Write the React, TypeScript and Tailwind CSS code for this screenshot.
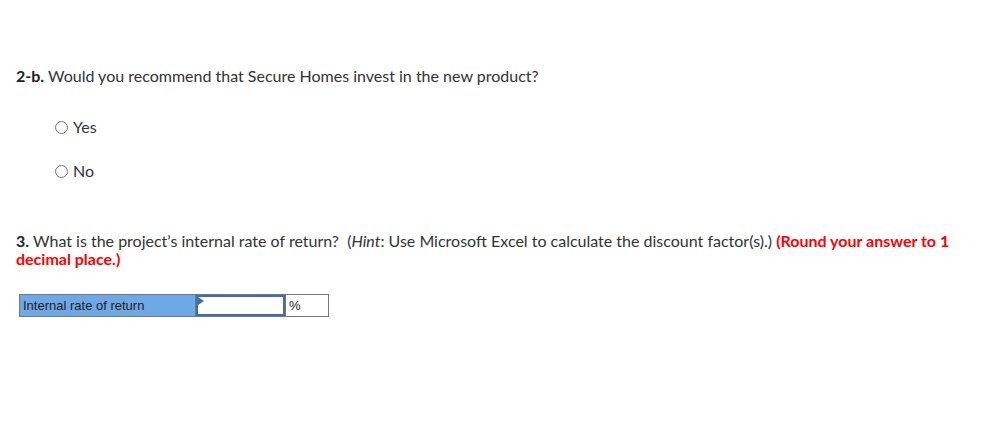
import { useState } from 'react';

const FONT = "font-['Lato','Liberation_Sans',sans-serif]";

export default function App() {
  const [choice, setChoice] = useState('');
  const [irr, setIrr] = useState('');

  return (
    <div className={`w-[1000px] h-[430px] bg-white text-[#333] ${FONT} text-[16px]`}>
      <div className="pt-[67px] pl-[16px]">
        <p className="leading-[18px]">
          <b className="font-bold text-[#222]">2-b.</b> Would you recommend that Secure Homes invest in the new product?
        </p>

        <div className="pl-[39px] pt-[33px] flex flex-col gap-[26px]">
          {['Yes', 'No'].map(opt => (
            <label key={opt} className="flex items-center gap-[5px] leading-[18px] cursor-pointer">
              <input
                type="radio"
                name="recommend"
                checked={choice === opt}
                onChange={() => setChoice(opt)}
                className="w-[13px] h-[13px] m-0 accent-[#666]"
              />
              <span>{opt}</span>
            </label>
          ))}
        </div>

        <p className="mt-[52px] leading-[18px] w-[935px]">
          <b className="font-bold text-[#222]">3.</b> What is the project’s internal rate of return?&nbsp; (<i>Hint</i>: Use Microsoft Excel to calculate the discount factor(s).){' '}
          <b className="font-bold text-[#f00]">(Round your answer to 1 decimal place.)</b>
        </p>

        <div className="mt-[26px] ml-[3px] flex w-[310px] h-[23px] border border-[#777] font-['Liberation_Sans',Arial,sans-serif] text-[13px] text-[#222]">
          <div className="w-[176px] bg-[#6fa8e6] border-r border-[#777] flex items-center pl-[3px]">
            Internal rate of return
          </div>
          <div className="relative w-[89px] border-2 border-[#3a6fb5] bg-white">
            <span className="absolute left-0 top-0 w-0 h-0 border-t-[4px] border-b-[4px] border-l-[6px] border-t-transparent border-b-transparent border-l-[#3a6fb5]" />
            <input
              value={irr}
              onChange={e => setIrr(e.target.value)}
              className="w-full h-full outline-none px-1 text-right bg-transparent"
            />
          </div>
          <div className="flex-1 flex items-center pl-[3px] border-l border-[#777]">%</div>
        </div>
      </div>
    </div>
  );
}
